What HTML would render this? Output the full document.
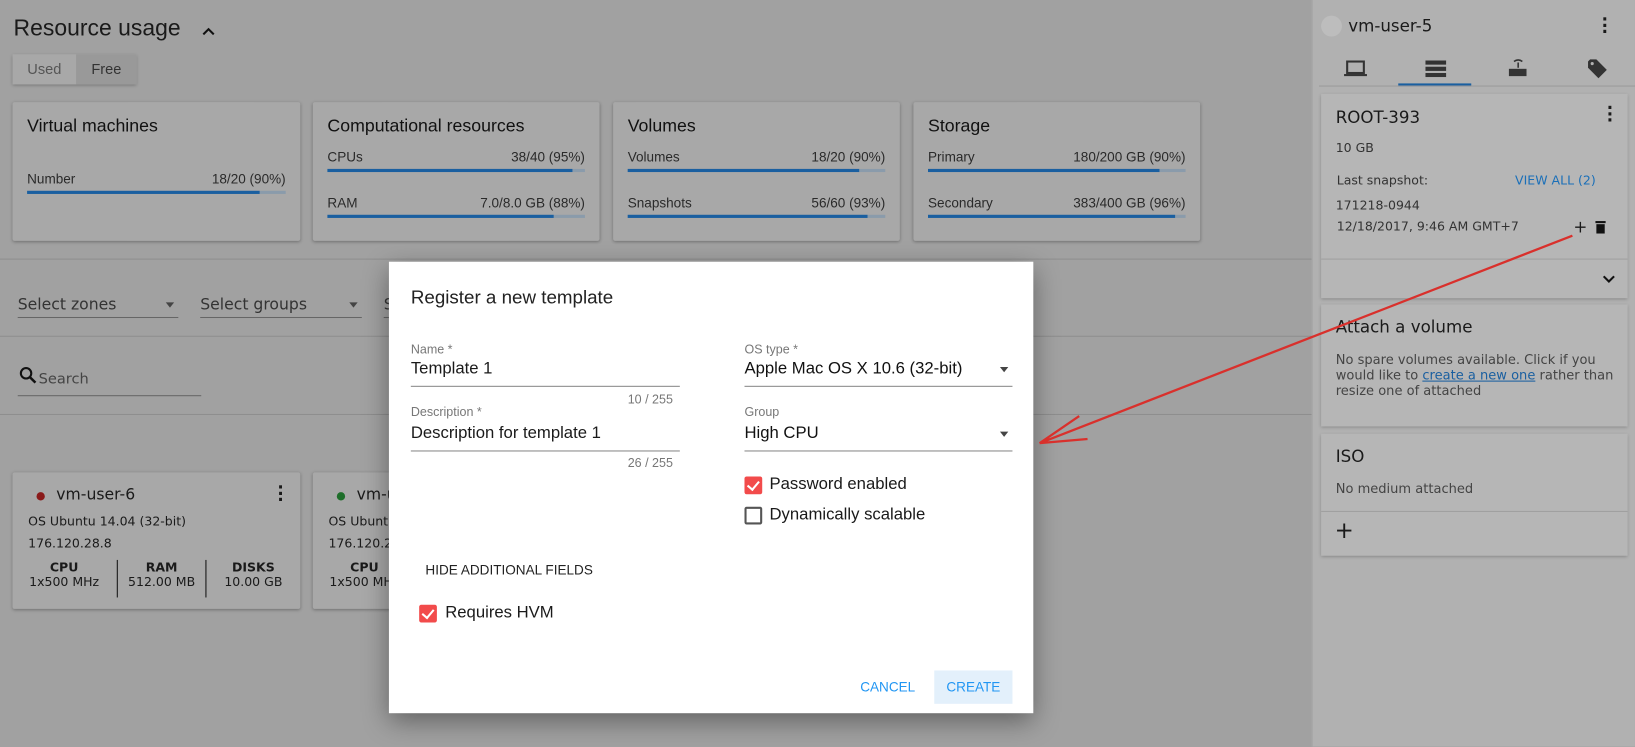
<!DOCTYPE html>
<html><head><meta charset="utf-8"><style>
*{box-sizing:border-box;margin:0;padding:0}
html,body{width:1635px;height:747px;overflow:hidden;background:#a1a1a1}
#w{position:absolute;left:0;top:0;width:1568px;height:716px;transform:scale(1.0427);transform-origin:0 0;font-family:"Liberation Sans",sans-serif;color:#1a1a1a}
.a{position:absolute}
.card{position:absolute;background:#a8a8a8;box-shadow:0 1px 3px rgba(0,0,0,.3);border-radius:2px}
.ct{position:absolute;left:14px;top:13px;font-size:17px;color:#111}
.lb{position:absolute;left:14px;right:14px;font-size:13px;color:#2a2a2a}
.lb span{float:right}
.bar{position:absolute;left:14px;right:14px;height:3px;background:#8a9bab}
.bar i{display:block;height:3px;background:#1a5fa0}
.dv{font-family:"DejaVu Sans",sans-serif}
.sel{position:absolute;border-bottom:1px solid #666;font-size:15px;color:#333;height:22px}
.sel:after{content:"";position:absolute;right:4px;top:7px;border:4px solid transparent;border-top:5px solid #444}
.sc{position:absolute;background:#b6b6b6;box-shadow:0 1px 3px rgba(0,0,0,.25);left:1267px;width:294px}
.cb{position:absolute;width:17px;height:17px;border-radius:2px}
.cb.on{background:#f24b4b}
.cb.on:after{content:"";position:absolute;left:5px;top:2px;width:5px;height:9px;border:solid #fff;border-width:0 2px 2px 0;transform:rotate(40deg)}
.cb.off{border:2px solid #555}
</style></head><body><div id="w">
<div class="a" style="left:13px;top:14px;font-size:22px">Resource usage</div>
<svg class="a" style="left:194px;top:25px" width="12" height="10"><path d="M1 8 L6 3 L11 8" stroke="#111" stroke-width="2" fill="none"/></svg>
<div class="a" style="left:12px;top:52px;width:119px;height:29px;box-shadow:0 1px 3px rgba(0,0,0,.3);background:#a8a8a8;font-size:14px">
<div class="a" style="left:0;width:61px;height:29px;line-height:29px;text-align:center;color:#555">Used</div>
<div class="a" style="left:61px;width:58px;height:29px;line-height:29px;text-align:center;background:#999;color:#333">Free</div></div>

<div class="card" style="left:12px;top:98px;width:276px;height:133px"><div class="ct">Virtual machines</div>
<div class="lb" style="top:66px">Number<span>18/20 (90%)</span></div><div class="bar" style="top:85px"><i style="width:90%"></i></div></div>
<div class="card" style="left:300px;top:98px;width:275px;height:133px"><div class="ct">Computational resources</div>
<div class="lb" style="top:45px">CPUs<span>38/40 (95%)</span></div><div class="bar" style="top:64px"><i style="width:95%"></i></div>
<div class="lb" style="top:89px">RAM<span>7.0/8.0 GB (88%)</span></div><div class="bar" style="top:108px"><i style="width:88%"></i></div></div>
<div class="card" style="left:588px;top:98px;width:275px;height:133px"><div class="ct">Volumes</div>
<div class="lb" style="top:45px">Volumes<span>18/20 (90%)</span></div><div class="bar" style="top:64px"><i style="width:90%"></i></div>
<div class="lb" style="top:89px">Snapshots<span>56/60 (93%)</span></div><div class="bar" style="top:108px"><i style="width:93%"></i></div></div>
<div class="card" style="left:876px;top:98px;width:275px;height:133px"><div class="ct">Storage</div>
<div class="lb" style="top:45px">Primary<span>180/200 GB (90%)</span></div><div class="bar" style="top:64px"><i style="width:90%"></i></div>
<div class="lb" style="top:89px">Secondary<span>383/400 GB (96%)</span></div><div class="bar" style="top:108px"><i style="width:96%"></i></div></div>

<div class="a" style="left:0;top:248px;width:1258px;height:1px;background:#8e8e8e"></div>
<div class="sel dv" style="left:17px;top:283px;width:154px">Select zones</div>
<div class="sel dv" style="left:192px;top:283px;width:155px">Select groups</div>
<div class="sel dv" style="left:368px;top:283px;width:30px">S</div>
<div class="a" style="left:0;top:322px;width:1258px;height:1px;background:#8e8e8e"></div>
<div class="a dv" style="left:17px;top:356px;width:176px;height:24px;border-bottom:1px solid #666;font-size:14px;color:#444;padding-left:20px">Search</div>
<svg class="a" style="left:18px;top:351px" width="18" height="18"><circle cx="7" cy="7" r="5" stroke="#111" stroke-width="2" fill="none"/><path d="M11 11 L16 16" stroke="#111" stroke-width="2.4"/></svg>
<div class="a" style="left:0;top:397px;width:1258px;height:1px;background:#8e8e8e"></div>

<div class="card dv" style="left:12px;top:453px;width:276px;height:131px">
<div class="a" style="left:23px;top:19px;width:8px;height:8px;border-radius:50%;background:#8a1a1a"></div>
<div class="a" style="left:42px;top:12px;font-size:15px">vm-user-6</div>
<div class="a" style="left:254px;top:12px;font-size:16px;font-weight:bold;line-height:6px">·<br>·<br>·</div>
<div class="a" style="left:15px;top:40px;font-size:12px">OS Ubuntu 14.04 (32-bit)</div>
<div class="a" style="left:15px;top:61px;font-size:12px">176.120.28.8</div>
<div class="a" style="left:0;top:84px;width:276px;font-size:12px;text-align:center">
<div class="a" style="left:0;width:99px"><b>CPU</b><br>1x500 MHz</div>
<div class="a" style="left:100px;width:86px;border-left:1px solid #111;border-right:1px solid #111;height:36px"><b>RAM</b><br>512.00 MB</div>
<div class="a" style="left:186px;width:90px"><b>DISKS</b><br>10.00 GB</div></div></div>
<div class="card dv" style="left:300px;top:453px;width:276px;height:131px">
<div class="a" style="left:23px;top:19px;width:8px;height:8px;border-radius:50%;background:#1e6e2a"></div>
<div class="a" style="left:42px;top:12px;font-size:15px">vm-user</div>
<div class="a" style="left:15px;top:40px;font-size:12px">OS Ubuntu</div>
<div class="a" style="left:15px;top:61px;font-size:12px">176.120.28</div>
<div class="a" style="left:0;top:84px;width:99px;font-size:12px;text-align:center"><b>CPU</b><br>1x500 MHz</div></div>

<!-- sidebar -->
<div class="a dv" style="left:1258px;top:0;width:310px;height:716px;background:#b1b1b1;border-left:1px solid #a6a6a6">
<div class="a" style="left:8px;top:15px;width:20px;height:20px;border-radius:50%;background:#bdbdbd"></div>
<div class="a" style="left:34px;top:15px;font-size:16px">vm-user-5</div>
<div class="a" style="left:277px;top:16px;font-size:16px;font-weight:bold;line-height:6px">·<br>·<br>·</div>
<svg class="a" style="left:30px;top:58px" width="22" height="16"><rect x="3" y="1" width="16" height="11" stroke="#333" stroke-width="2" fill="none"/><rect x="0" y="13" width="22" height="2" fill="#333"/></svg>
<svg class="a" style="left:108px;top:58px" width="20" height="16"><rect x="0" y="0" width="20" height="4" fill="#333"/><rect x="0" y="6" width="20" height="4" fill="#333"/><rect x="0" y="12" width="20" height="4" fill="#333"/></svg>
<svg class="a" style="left:188px;top:56px" width="18" height="18"><rect x="0" y="10" width="17" height="7" fill="#333"/><path d="M9 9 V4 M5 3 Q9 0 13 3" stroke="#333" stroke-width="1.5" fill="none"/></svg>
<svg class="a" style="left:263px;top:56px" width="20" height="20"><path d="M1 3 V9 L11 19 L19 11 L9 1 H3 Z" fill="#333"/><circle cx="5" cy="5" r="1.5" fill="#b1b1b1"/></svg>
<div class="a" style="left:82px;top:80px;width:70px;height:3px;background:#1a5fa0"></div>
<div class="a" style="left:6px;top:82px;width:304px;height:1px;background:#9a9a9a"></div>
</div>
<div class="sc dv" style="top:90px;height:196px">
<div class="a" style="left:14px;top:13px;font-size:16px">ROOT-393</div>
<div class="a" style="left:274px;top:11px;font-size:16px;font-weight:bold;line-height:6px">·<br>·<br>·</div>
<div class="a" style="left:14px;top:45px;font-size:12px;color:#333">10 GB</div>
<div class="a" style="left:15px;top:76px;font-size:12px;color:#333">Last snapshot:</div>
<div class="a" style="left:186px;top:76px;font-size:12px;color:#1a6fb8">VIEW ALL (2)</div>
<div class="a" style="left:14px;top:100px;font-size:12px;color:#333">171218-0944</div>
<div class="a" style="left:15px;top:120px;font-size:12px;color:#333">12/18/2017, 9:46 AM GMT+7</div>
<div class="a" style="left:242px;top:118px;font-size:16px">+</div>
<svg class="a" style="left:263px;top:121px" width="10" height="13"><rect x="0" y="1" width="10" height="2" fill="#111"/><rect x="1" y="4" width="8" height="9" fill="#111"/></svg>
<div class="a" style="left:0;top:158px;width:294px;height:1px;background:#a0a0a0"></div>
<svg class="a" style="left:270px;top:174px" width="12" height="8"><path d="M1 1 L6 6 L11 1" stroke="#111" stroke-width="2" fill="none"/></svg>
</div>
<div class="sc dv" style="top:292px;height:117px">
<div class="a" style="left:14px;top:12px;font-size:16px">Attach a volume</div>
<div class="a" style="left:14px;top:45px;font-size:12.5px;color:#444;line-height:15px;width:280px">No spare volumes available. Click if you would like to <u style="color:#1a5fa0">create a new one</u> rather than resize one of attached</div>
</div>
<div class="sc dv" style="top:416px;height:117px">
<div class="a" style="left:14px;top:12px;font-size:16px">ISO</div>
<div class="a" style="left:14px;top:45px;font-size:12.5px;color:#444">No medium attached</div>
<div class="a" style="left:0;top:74px;width:294px;height:1px;background:#a0a0a0"></div>
<div class="a" style="left:13px;top:81px;font-size:22px">+</div>
</div>

<!-- dialog -->
<div class="a" style="left:373px;top:251px;width:618px;height:433px;background:#fff;box-shadow:0 8px 24px rgba(0,0,0,.4)">
<div class="a" style="left:21px;top:24px;font-size:18px;color:#222">Register a new template</div>
<div class="a" style="left:21px;top:77px;font-size:12px;color:#777">Name *</div>
<div class="a" style="left:21px;top:94px;width:258px;height:26px;border-bottom:1px solid #888;font-size:16px">Template 1</div>
<div class="a" style="left:229px;top:125px;font-size:12px;color:#777">10 / 255</div>
<div class="a" style="left:21px;top:137px;font-size:12px;color:#777">Description *</div>
<div class="a" style="left:21px;top:156px;width:258px;height:26px;border-bottom:1px solid #888;font-size:16px">Description for template 1</div>
<div class="a" style="left:229px;top:186px;font-size:12px;color:#777">26 / 255</div>
<div class="a" style="left:341px;top:77px;font-size:12px;color:#777">OS type *</div>
<div class="sel" style="left:341px;top:94px;width:257px;height:26px;border-color:#888;font-size:16px;color:#111">Apple Mac OS X 10.6 (32-bit)</div>
<div class="a" style="left:341px;top:137px;font-size:12px;color:#777">Group</div>
<div class="sel" style="left:341px;top:156px;width:257px;height:26px;border-color:#888;font-size:16px;color:#111">High CPU</div>
<div class="cb on" style="left:341px;top:206px"></div><div class="a" style="left:365px;top:205px;font-size:16px">Password enabled</div>
<div class="cb off" style="left:341px;top:235px"></div><div class="a" style="left:365px;top:234px;font-size:16px">Dynamically scalable</div>
<div class="a" style="left:35px;top:288px;font-size:13px;color:#222">HIDE ADDITIONAL FIELDS</div>
<div class="cb on" style="left:29px;top:329px"></div><div class="a" style="left:54px;top:328px;font-size:16px">Requires HVM</div>
<div class="a" style="left:452px;top:400px;font-size:13px;color:#2196f3">CANCEL</div>
<div class="a" style="left:523px;top:392px;width:75px;height:32px;background:#e3f0fb;color:#2196f3;font-size:13px;text-align:center;line-height:32px">CREATE</div>
</div>
<svg class="a" style="left:0;top:0" width="1568" height="716"><path d="M1508 226 L997 425 M997 425 L1035 399 M997 425 L1043 421" stroke="#d9302c" stroke-width="2.2" fill="none"/></svg>
</div></body></html>
